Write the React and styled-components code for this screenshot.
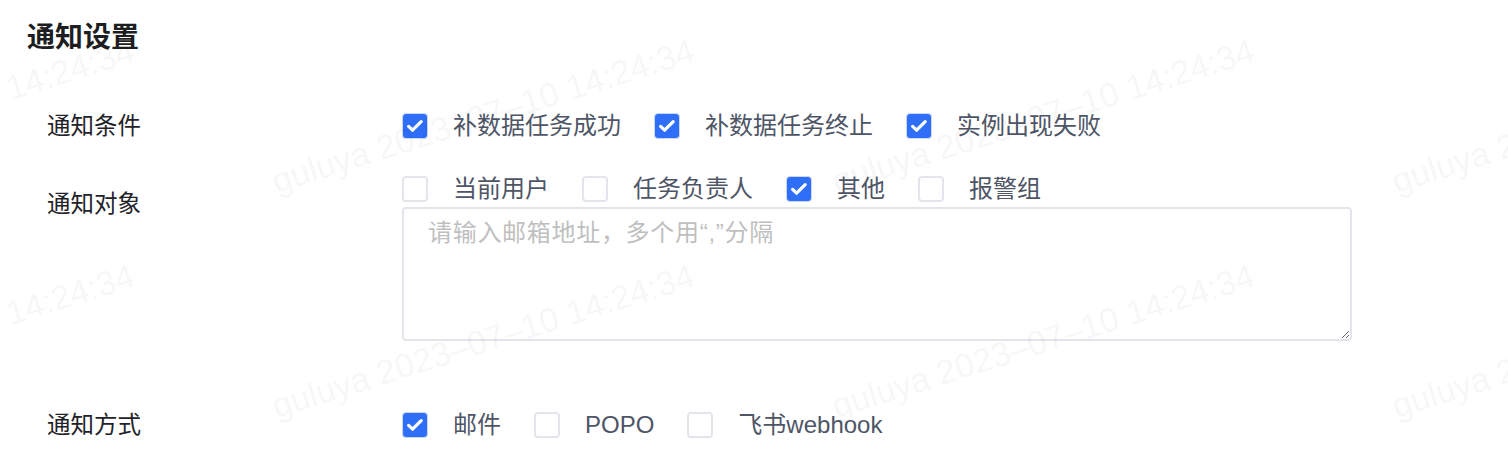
import React, { useState } from "react";
import styled, { createGlobalStyle } from "styled-components";

const GlobalStyle = createGlobalStyle`
  html, body { margin: 0; padding: 0; background: #ffffff; }
  body { font-family: "Liberation Sans", "Noto Sans CJK SC", sans-serif; }
  * { box-sizing: border-box; }
`;

const Page = styled.div`
  position: relative;
  width: 1508px;
  height: 464px;
  overflow: hidden;
  padding: 20px 0 0 27px;
`;

const Title = styled.h2`
  margin: 0;
  font-size: 28px;
  line-height: 36px;
  font-weight: 700;
  color: #1d1e22;
`;

const Form = styled.div`
  display: flex;
  flex-direction: column;
  padding-left: 20px;
  margin-top: 52px;
`;

const Row = styled.div`
  display: grid;
  grid-template-columns: 355px 1fr;
  margin-top: ${(p) => p.$gap || 0}px;
`;

const Label = styled.div`
  font-size: 23.5px;
  line-height: 36px;
  color: #1f2329;
  padding-top: ${(p) => p.$offset || 0}px;
`;

const Field = styled.div`
  display: flex;
  flex-direction: column;
`;

const Group = styled.div`
  display: flex;
  align-items: center;
  height: 36px;
  gap: 33px;
`;

const Item = styled.label`
  display: flex;
  align-items: center;
  gap: 25px;
  cursor: pointer;
  font-size: 24px;
  line-height: 36px;
  color: #4e5566;
  white-space: nowrap;
`;

const Box = styled.span`
  width: 26px;
  height: 26px;
  border-radius: 4px;
  display: inline-flex;
  align-items: center;
  justify-content: center;
  flex: none;
  background: ${(p) => (p.$on ? "#2f6ef7" : "#ffffff")};
  border: ${(p) => (p.$on ? "1px solid #c9d6f5" : "2px solid #e4e5ea")};
`;

const Area = styled.textarea`
  width: 950px;
  height: 134px;
  margin: 0;
  padding: 6px 24px;
  border: 2px solid #e4e5ea;
  border-radius: 4px;
  font-family: "Liberation Sans", "Noto Sans CJK SC", sans-serif;
  font-size: 24px;
  letter-spacing: 0.7px;
  line-height: 35px;
  color: #1f2329;
  background: transparent;
  outline: none;
  resize: both;
  &::placeholder { color: #bfbfbf; }
`;

const MarkLayer = styled.div`
  position: absolute;
  inset: 0;
  pointer-events: none;
  overflow: hidden;
  z-index: 2;
`;

const Mark = styled.div.attrs((p) => ({
  style: { left: `${p.$x}px`, top: `${p.$y}px` },
}))`
  position: absolute;
  font-family: "Liberation Sans", sans-serif;
  font-size: 34px;
  line-height: 34px;
  white-space: nowrap;
  color: rgba(0, 0, 0, 0.055);
  transform: rotate(-17.5deg);
  transform-origin: 0 100%;
`;

function Check({ on }) {
  return (
    <Box $on={on}>
      {on && (
        <svg width="18" height="18" viewBox="0 0 18 18">
          <path
            d="M2.6 9.4 L6.6 13.2 L15.2 4.6"
            fill="none"
            stroke="#ffffff"
            strokeWidth="3.2"
            strokeLinecap="round"
            strokeLinejoin="round"
          />
        </svg>
      )}
    </Box>
  );
}

function CheckGroup({ items }) {
  const [state, setState] = useState(items.map((i) => i.on));
  return (
    <Group>
      {items.map((it, idx) => (
        <Item
          key={it.label}
          onClick={() =>
            setState((s) => s.map((v, j) => (j === idx ? !v : v)))
          }
        >
          <Check on={state[idx]} />
          {it.label}
        </Item>
      ))}
    </Group>
  );
}

const marks = [];
[-282, 278, 838, 1398].forEach((x) =>
  [164, 389].forEach((y) => marks.push({ x, y }))
);

export default function App() {
  return (
    <>
      <GlobalStyle />
      <Page>
        <Title>通知设置</Title>
        <Form>
          <Row>
            <Label>通知条件</Label>
            <CheckGroup
              items={[
                { label: "补数据任务成功", on: true },
                { label: "补数据任务终止", on: true },
                { label: "实例出现失败", on: true },
              ]}
            />
          </Row>
          <Row $gap={27}>
            <Label $offset={15}>通知对象</Label>
            <Field>
              <CheckGroup
                items={[
                  { label: "当前用户", on: false },
                  { label: "任务负责人", on: false },
                  { label: "其他", on: true },
                  { label: "报警组", on: false },
                ]}
              />
              <Area placeholder="请输入邮箱地址，多个用“,”分隔" />
            </Field>
          </Row>
          <Row $gap={66}>
            <Label>通知方式</Label>
            <CheckGroup
              items={[
                { label: "邮件", on: true },
                { label: "POPO", on: false },
                { label: "飞书webhook", on: false },
              ]}
            />
          </Row>
        </Form>
        <MarkLayer>
          {marks.map((m, i) => (
            <Mark key={i} $x={m.x} $y={m.y}>
              guluya 2023–07–10 14:24:34
            </Mark>
          ))}
        </MarkLayer>
      </Page>
    </>
  );
}
